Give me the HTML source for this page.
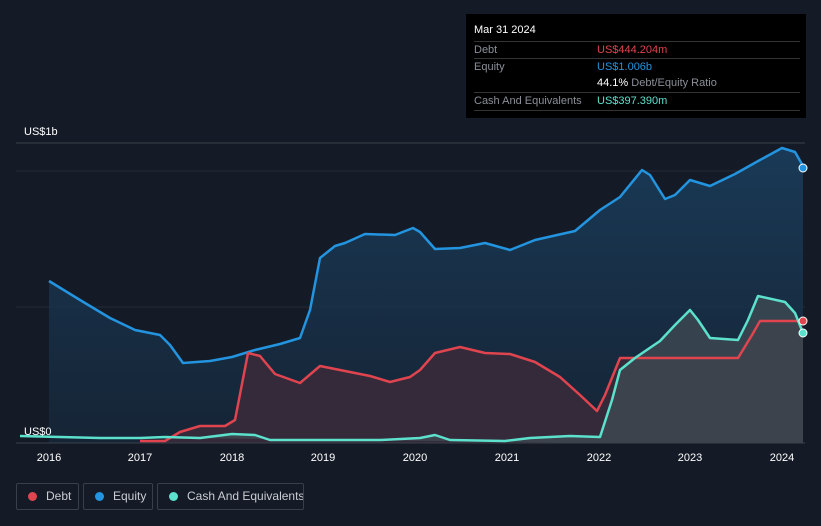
<!DOCTYPE html><html><head><style>
html,body{margin:0;background:#151b26;font-family:"Liberation Sans",sans-serif;width:821px;height:526px;overflow:hidden;position:relative}
.tt{position:absolute;left:466px;top:14px;width:340px;height:104px;background:#000;}
.r{position:absolute;left:8px;width:326px;font-size:11px;color:#8a8f98;border-top:1px solid #333;height:17px;line-height:17px}
.lg{position:absolute;top:483px;height:27px;border:1px solid #3a404b;border-radius:2px;color:#c9ccd1;font-size:12px;line-height:25px;box-sizing:border-box;white-space:nowrap;overflow:hidden}
.d{display:inline-block;width:9px;height:9px;border-radius:50%;margin:0 9px 0 11px;vertical-align:-1px}
</style></head><body>
<svg width="821" height="526" style="position:absolute;left:0;top:0">
<defs><linearGradient id="e" x1="0" y1="0" x2="0" y2="1"><stop offset="0" stop-color="#1a3d5c" stop-opacity=".9"/><stop offset="1" stop-color="#16293d" stop-opacity=".7"/></linearGradient></defs>
<line x1="16" y1="143" x2="805" y2="143" stroke="#3a404b"/>
<line x1="16" y1="171" x2="805" y2="171" stroke="#222a36"/>
<line x1="16" y1="307" x2="805" y2="307" stroke="#222a36"/>
<path d="M49,281 L80,300 L110,318 L135,330 L160,335 L170,345 L183,363 L210,361 L232,357 L255,350 L280,344 L300,338 L310,310 L320,258 L335,246 L345,243 L365,234 L395,235 L413,228 L420,232 L435,249 L460,248 L485,243 L510,250 L535,240 L575,231 L600,210 L620,197 L642,170 L650,175 L665,199 L675,195 L690,180 L710,186 L735,174 L760,160 L782,148 L795,152 L803,166 L803,443 L49,443Z" fill="url(#e)"/>
<path d="M140,441 L165,441 L180,432 L200,426 L225,426 L235,420 L248,353 L260,356 L275,374 L300,383 L320,366 L340,370 L370,376 L390,382 L410,377 L420,370 L435,353 L460,347 L485,353 L510,354 L535,362 L560,377 L580,395 L597,411 L605,395 L620,358 L650,358 L690,358 L738,358 L752,335 L760,321 L803,321 L803,443 L140,443Z" fill="#352a3a"/>
<path d="M20,436 L100,438 L140,438 L165,437 L200,438 L232,434 L255,435 L270,440 L310,440 L380,440 L420,438 L435,435 L450,440 L505,441 L530,438 L570,436 L600,437 L612,400 L620,370 L635,358 L660,341 L675,325 L690,310 L698,320 L710,338 L738,340 L748,320 L758,296 L785,302 L795,313 L803,333 L803,443 L600,443Z" fill="#3e4a52" opacity=".8"/>
<line x1="16" y1="443" x2="805" y2="443" stroke="#3a404b"/>
<path d="M49,281 L80,300 L110,318 L135,330 L160,335 L170,345 L183,363 L210,361 L232,357 L255,350 L280,344 L300,338 L310,310 L320,258 L335,246 L345,243 L365,234 L395,235 L413,228 L420,232 L435,249 L460,248 L485,243 L510,250 L535,240 L575,231 L600,210 L620,197 L642,170 L650,175 L665,199 L675,195 L690,180 L710,186 L735,174 L760,160 L782,148 L795,152 L803,166" fill="none" stroke="#2394df" stroke-width="2.5" stroke-linejoin="round"/>
<path d="M140,441 L165,441 L180,432 L200,426 L225,426 L235,420 L248,353 L260,356 L275,374 L300,383 L320,366 L340,370 L370,376 L390,382 L410,377 L420,370 L435,353 L460,347 L485,353 L510,354 L535,362 L560,377 L580,395 L597,411 L605,395 L620,358 L650,358 L690,358 L738,358 L752,335 L760,321 L803,321" fill="none" stroke="#e0444f" stroke-width="2.5" stroke-linejoin="round"/>
<path d="M20,436 L100,438 L140,438 L165,437 L200,438 L232,434 L255,435 L270,440 L310,440 L380,440 L420,438 L435,435 L450,440 L505,441 L530,438 L570,436 L600,437 L612,400 L620,370 L635,358 L660,341 L675,325 L690,310 L698,320 L710,338 L738,340 L748,320 L758,296 L785,302 L795,313 L803,333" fill="none" stroke="#5ce1cc" stroke-width="2.5" stroke-linejoin="round"/>
<circle cx="803" cy="168" r="4" fill="#2394df" stroke="#fff" stroke-width="1"/>
<circle cx="803" cy="321" r="4" fill="#e0444f" stroke="#fff" stroke-width="1"/>
<circle cx="803" cy="333" r="4" fill="#5ce1cc" stroke="#fff" stroke-width="1"/>
<g fill="#fff" font-size="11" font-family="Liberation Sans">
<text x="24" y="135">US$1b</text><text x="24" y="435">US$0</text>
<g text-anchor="middle"><text x="49" y="461">2016</text><text x="140" y="461">2017</text><text x="232" y="461">2018</text><text x="323" y="461">2019</text><text x="415" y="461">2020</text><text x="507" y="461">2021</text><text x="599" y="461">2022</text><text x="690" y="461">2023</text><text x="782" y="461">2024</text></g></g>
</svg>
<div class="tt">
<div style="position:absolute;left:8px;top:10px;color:#fff;font-size:11px">Mar 31 2024</div>
<div class="r" style="top:27px">Debt<span style="position:absolute;left:123px;color:#e0444f">US$444.204m</span></div>
<div class="r" style="top:44px">Equity<span style="position:absolute;left:123px;color:#2394df">US$1.006b</span></div>
<div class="r" style="top:61px;border:0"><span style="position:absolute;left:123px"><b style="color:#fff;font-weight:normal">44.1%</b> Debt/Equity Ratio</span></div>
<div class="r" style="top:78px;border-bottom:1px solid #333">Cash And Equivalents<span style="position:absolute;left:123px;color:#5ce1cc">US$397.390m</span></div>
</div>
<div class="lg" style="left:16px;width:63px"><span class="d" style="background:#e0444f"></span>Debt</div>
<div class="lg" style="left:83px;width:70px"><span class="d" style="background:#2394df"></span>Equity</div>
<div class="lg" style="left:157px;width:147px"><span class="d" style="background:#5ce1cc"></span>Cash And Equivalents</div>
</body></html>
